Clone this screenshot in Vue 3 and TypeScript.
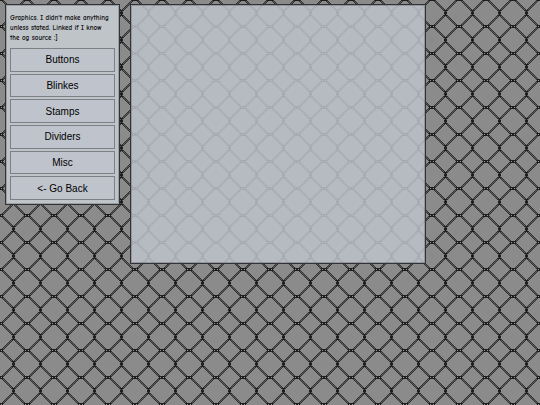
<script setup lang="ts">
interface NavItem {
  label: string
  href: string
}

const items: NavItem[] = [
  { label: 'Buttons', href: '#buttons' },
  { label: 'Blinkes', href: '#blinkes' },
  { label: 'Stamps', href: '#stamps' },
  { label: 'Dividers', href: '#dividers' },
  { label: 'Misc', href: '#misc' },
  { label: '<- Go Back', href: '#home' },
]

const TILE = 27

type Tone = 'knot' | 'edge' | 'wire' | 'glint'

// Tone of one pixel of the chain-link tile, mirrored around its two knots.
function toneAt(x: number, y: number): Tone | null {
  const row = (y + 1) % TILE
  const dx = Math.min(x, TILE - 1 - x)
  const dy = Math.min(row, TILE - row)
  if (dx <= 2 && dy <= 1) return dx === 1 && dy === 0 ? 'glint' : 'knot'
  if (dx >= 12 && dy >= 11) return dx === 12 && dy === 12 ? 'wire' : 'knot'
  const offset = dx - dy
  if (offset === 0 || offset === 2) return 'edge'
  if (offset === 1) return 'wire'
  return null
}

function pixels(tone: Tone): string {
  let d = ''
  for (let y = 0; y < TILE; y++) {
    for (let x = 0; x < TILE; x++) {
      if (toneAt(x, y) === tone) d += `M${x} ${y}h1v1h-1z`
    }
  }
  return d
}

const layers = [
  { tone: 'knot', d: pixels('knot') },
  { tone: 'edge', d: pixels('edge') },
  { tone: 'wire', d: pixels('wire') },
  { tone: 'glint', d: pixels('glint') },
]
</script>

<template>
  <div class="page">
    <svg class="fence" aria-hidden="true">
      <defs>
        <pattern id="mesh" width="27" height="27" patternUnits="userSpaceOnUse" shape-rendering="crispEdges">
          <rect width="27" height="27" fill="#8b8b8b" />
          <path v-for="layer in layers" :key="layer.tone" :class="layer.tone" :d="layer.d" />
        </pattern>
      </defs>
      <rect width="100%" height="100%" fill="url(#mesh)" />
    </svg>
    <div class="layout">
      <aside class="panel sidebar">
        <p class="note">Graphics. I didn't make anything unless stated. Linked if I know the og source :]</p>
        <nav class="menu">
          <a v-for="item in items" :key="item.label" class="link" :href="item.href">{{ item.label }}</a>
        </nav>
      </aside>
      <main class="panel content"></main>
    </div>
  </div>
</template>

<style>
body {
  background: #8b8b8b;
}
</style>

<style scoped>
.page {
  position: relative;
  min-height: 100vh;
}
.fence {
  position: absolute;
  inset: 0;
  width: 100%;
  height: 100%;
}
.knot {
  fill: #1e1e1e;
}
.edge {
  fill: #333;
}
.wire {
  fill: #5a5a5a;
}
.glint {
  fill: #969696;
}
.layout {
  position: relative;
  display: flex;
  align-items: flex-start;
  gap: 10px;
  padding: 4px 5px;
}
.panel {
  box-sizing: border-box;
  border: 1px solid #303236;
  box-shadow: inset 0 0 0 1px rgba(70, 74, 80, 0.3);
}
.sidebar {
  flex: none;
  width: 115px;
  padding: 8px 4px 4px;
  background: #bfc4c9;
}
.note {
  margin: 0 0 5px;
  padding-right: 4px;
  font: bold 7px/10px "Comic Sans MS", "Comic Neue", cursive;
  color: #111;
}
.menu {
  display: grid;
  grid-auto-rows: 1fr;
  gap: 2px;
  height: 152px;
}
.link {
  display: flex;
  align-items: center;
  justify-content: center;
  border: 1px solid #7b8085;
  background: #bfc4cc;
  color: #000;
  font: 10px "Liberation Sans", sans-serif;
  text-decoration: none;
}
.content {
  width: calc(55vw - 1px);
  aspect-ratio: 74 / 65;
  background: rgba(189, 194, 202, 0.86);
}
</style>
